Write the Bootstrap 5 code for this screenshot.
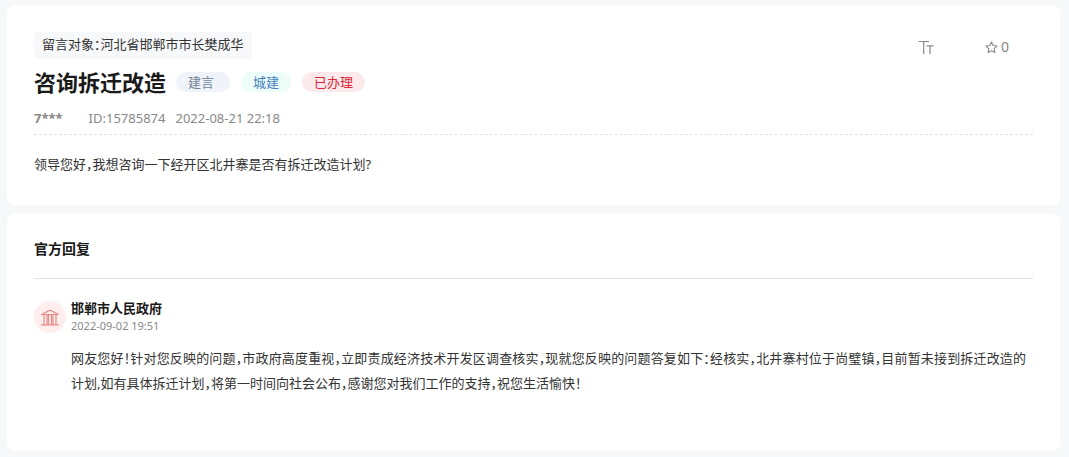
<!DOCTYPE html>
<html lang="zh-CN">
<head>
<meta charset="utf-8">
<meta name="viewport" content="width=device-width, initial-scale=1">
<title>咨询拆迁改造</title>
<link href="https://cdn.jsdelivr.net/npm/bootstrap@5.3.0/dist/css/bootstrap.min.css" rel="stylesheet">
<style>
  body {
    background: #f7f8fa;
    color: #333;
    font-family: "Noto Sans", "Noto Sans CJK SC", sans-serif;
    font-size: 13px;
    line-height: 25px;
    font-feature-settings: "halt";
  }
  .page { padding: 5px 9px 6px 7px; gap: 9px; }
  .panel { border-radius: 8px; padding: 27px; }
  .target { background: #f7f8fa; border-radius: 2px; padding: 0 8px 2px; }
  .tools { gap: 51px; padding-right: 24px; color: #888; }
  .tools .btn { font-size: 14px; line-height: 22px; color: inherit; gap: 3px; }
  .topic { font-size: 22px; line-height: 30px; color: #1a1a1a; }
  .tag { line-height: 20px; padding: 0 12px; }
  .tag-type { background: #f0f4fa; color: #6f8398; padding-right: 16px; }
  .tag-field { background: #ecfdfa; color: #4a7fc0; }
  .tag-done { background: #fbe9eb; color: #d9283a; }
  .tags { gap: 11px; margin-left: 10px; }
  .meta { color: #888; line-height: 20px; gap: 10px; margin-top: 11px; padding-bottom: 6px; border-bottom: 1px dashed #e4e4e4; }
  .author { margin-right: 16px; }
  .question { margin: 17px 0 1px; }
  .reply-title { font-size: 14px; line-height: 16px; color: #1a1a1a; padding-bottom: 21px; border-bottom: 1px solid #e4e4e4; }
  .reply { gap: 5px; margin-top: 20px; }
  .avatar { width: 32px; height: 32px; margin-top: 2px; background: #ffeeed; color: #e78c88; }
  .office { font-size: 13px; line-height: 18px; color: #1a1a1a; }
  .time { font-size: 11px; line-height: 18px; color: #888; }
  .answer { margin: 11px 0 28px; padding-right: 7px; text-align: justify; }
</style>
</head>
<body>
<main class="page d-flex flex-column">
  <article class="panel bg-white">
    <div class="d-flex justify-content-between align-items-start">
      <div class="target">留言对象：河北省邯郸市市长樊成华</div>
      <div class="tools d-flex align-items-center mt-1">
        <button type="button" class="btn border-0 p-0 d-flex align-items-center" aria-label="字号">
          <svg width="16" height="14" viewBox="0 0 16 14" fill="none" stroke="currentColor" stroke-width="1.200" aria-hidden="true"><path d="M0.500 1.500H11M5.700 1.500V14M8.500 5.800H15.500M12 5.800V14" /></svg>
        </button>
        <button type="button" class="btn border-0 p-0 d-flex align-items-center" aria-label="收藏 0">
          <svg width="13" height="13" viewBox="0 0 13 13" fill="none" stroke="currentColor" stroke-width="1.100" stroke-linejoin="round" aria-hidden="true"><path d="M6.500 1L8.200 4.500L12 5L9.200 7.700L9.900 11.600L6.500 9.800L3.100 11.600L3.800 7.700L1 5L4.800 4.500Z"/></svg>
          <span>0</span>
        </button>
      </div>
    </div>
    <div class="d-flex flex-wrap align-items-center mt-2">
      <h1 class="topic fw-bold m-0">咨询拆迁改造</h1>
      <div class="tags d-flex">
        <span class="tag tag-type rounded-pill">建言</span>
        <span class="tag tag-field rounded-pill">城建</span>
        <span class="tag tag-done rounded-pill">已办理</span>
      </div>
    </div>
    <div class="meta d-flex flex-wrap">
      <span class="author fw-bold">7***</span>
      <span>ID:15785874</span>
      <time datetime="2022-08-21T22:18">2022-08-21 22:18</time>
    </div>
    <p class="question">领导您好，我想咨询一下经开区北井寨是否有拆迁改造计划?</p>
  </article>

  <section class="panel bg-white">
    <h2 class="reply-title fw-bold m-0">官方回复</h2>
    <div class="reply d-flex">
      <div class="avatar rounded-circle flex-shrink-0 d-flex align-items-center justify-content-center">
        <svg width="18" height="17" viewBox="0 0 18 17" fill="none" stroke="currentColor" stroke-width="1.200" aria-hidden="true"><path d="M0 15.800H18M0 5.500H18M1.500 5L9 1.200L16.500 5M3 5.500V15.500M6 5.500V15.500M7.500 5.500V15.500M10.500 5.500V15.500M12 5.500V15.500M15 5.500V15.500"/></svg>
      </div>
      <div class="flex-grow-1">
        <h3 class="office fw-bold m-0">邯郸市人民政府</h3>
        <time class="time d-block" datetime="2022-09-02T19:51">2022-09-02 19:51</time>
        <p class="answer">网友您好！针对您反映的问题，市政府高度重视，立即责成经济技术开发区调查核实，现就您反映的问题答复如下：经核实，北井寨村位于尚璧镇，目前暂未接到拆迁改造的计划,如有具体拆迁计划，将第一时间向社会公布，感谢您对我们工作的支持，祝您生活愉快！</p>
      </div>
    </div>
  </section>
</main>
<script src="https://cdn.jsdelivr.net/npm/bootstrap@5.3.0/dist/js/bootstrap.bundle.min.js"></script>
</body>
</html>
